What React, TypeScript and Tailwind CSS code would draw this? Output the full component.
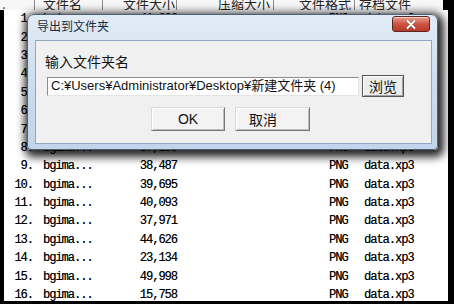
import React from 'react';

const rows: [string, string][] = [
  ['1.', '41,206'],
  ['2.', '36,512'],
  ['3.', '42,870'],
  ['4.', '39,104'],
  ['5.', '45,331'],
  ['6.', '28,764'],
  ['7.', '40,518'],
  ['8.', '37,295'],
  ['9.', '38,487'],
  ['10.', '39,695'],
  ['11.', '40,093'],
  ['12.', '37,971'],
  ['13.', '44,626'],
  ['14.', '23,134'],
  ['15.', '49,998'],
  ['16.', '15,758'],
];

const cjk = "font-['Noto_Sans_CJK_SC',sans-serif]";

const App: React.FC = () => {
  return (
    <div className="relative w-[454px] h-[304px] bg-black overflow-hidden font-['Liberation_Mono','Noto_Sans_CJK_SC',monospace]">
      {/* column header, top cut off */}
      <div className={`flex h-[10px] w-[443px] bg-[#f7f7f7] overflow-hidden text-[13px] leading-[13px] text-[#222] ${cjk}`}>
        <div className="w-[35px] flex items-end border-r border-[#8a8a8a] pl-[2px]">.</div>
        <div className="w-[68px] flex items-end border-r border-[#8a8a8a] pl-[8px]">文件名</div>
        <div className="w-[74px] flex items-end justify-end border-r border-[#8a8a8a] pr-[1px]">文件大小</div>
        <div className="w-[97px] flex items-end justify-end border-r border-[#8a8a8a] pr-[3px]">压缩大小</div>
        <div className="w-[81px] flex items-end justify-end border-r border-[#8a8a8a] pr-[3px]">文件格式</div>
        <div className="flex-1 flex items-end pl-[4px]">存档文件</div>
      </div>

      {/* file list */}
      <div className="ml-[4px] mr-[6px] h-[291px] bg-white overflow-hidden text-[12px] tracking-[-1px] text-black [text-shadow:0.2px_0_0_rgba(0,0,0,0.6)]">
        {rows.map(([n, size]) => (
          <div key={n} className="grid grid-cols-[30px_70px_74px_151px_35px_1fr] h-[18.4px] items-center leading-none">
            <span className="text-right pr-[1px]">{n}</span>
            <span className="pl-[9px]">bgima...</span>
            <span className="text-right pr-[1px]">{size}</span>
            <span />
            <span>PNG</span>
            <span>data.xp3</span>
          </div>
        ))}
      </div>

      {/* dialog */}
      <div className="absolute left-[27px] top-[14px] w-[411px] h-[136px] flex flex-col rounded-t-[7px] rounded-b-[4px] border border-[#4d6078] bg-gradient-to-b from-[#e2ecf7] via-[#cddcee] to-[#c2d4ea] shadow-[2px_3px_9px_4px_rgba(0,0,0,0.85)]">
        <div className="h-[25px] flex items-start">
          <span className={`mt-[3px] ml-[9px] text-[12px] leading-[16px] text-[#1c2c40] ${cjk}`}>导出到文件夹</span>
          <div className="ml-auto mr-[7px] mt-[1px] w-[38px] h-[16px] rounded-[3px] border border-[#5c2520] bg-gradient-to-b from-[#e7a08f] via-[#cd5441] to-[#b83a28] flex items-center justify-center shadow-[inset_0_1px_0_rgba(255,255,255,0.5)]">
            <svg width="10" height="9" viewBox="0 0 10 9">
              <path d="M1.5 1 L8.5 8 M8.5 1 L1.5 8" stroke="#4a1a14" strokeWidth="3" strokeLinecap="round" opacity="0.5" />
              <path d="M1.5 1 L8.5 8 M8.5 1 L1.5 8" stroke="#ffffff" strokeWidth="2" strokeLinecap="round" />
            </svg>
          </div>
        </div>

        <div className="flex-1 ml-[7px] mr-[5px] mb-[5px] bg-[#f0f0f0] border border-[#93a7c0] flex flex-col">
          <div className={`pt-[12px] pl-[9px] text-[14px] leading-[16px] text-[#111] ${cjk}`}>输入文件夹名</div>
          <div className="mt-[6px] flex items-center h-[22px] pl-[11px]">
            <div className="w-[312px] h-[19px] bg-white border border-[#8c8c8c] border-r-[#e4e4e4] border-b-[#e4e4e4] flex items-center pl-[3px] overflow-hidden whitespace-nowrap text-[13px] text-[#111] font-['Liberation_Sans','Noto_Sans_CJK_JP',sans-serif]">
              C:¥Users¥Administrator¥Desktop¥新建文件夹 (4)
            </div>
            <div className={`ml-[3px] w-[42px] h-[22px] flex items-center justify-center bg-[#ececec] border border-[#555] shadow-[inset_1px_1px_0_#fff,inset_-1px_-1px_0_#a0a0a0] text-[14px] text-[#111] ${cjk}`}>
              浏览
            </div>
          </div>
          <div className="mt-[10px] flex pl-[115px] gap-[10px]">
            <div className="w-[74px] h-[24px] flex items-center justify-center bg-[#f3f3f3] border border-[#d8d8d8] border-r-[#777] border-b-[#777] shadow-[inset_1px_1px_0_#fff,inset_-1px_-1px_0_#bdbdbd] text-[14px] text-[#111] font-['Liberation_Sans',sans-serif]">
              OK
            </div>
            <div className={`w-[75px] h-[24px] flex items-center pl-[13px] bg-[#f3f3f3] border border-[#d8d8d8] border-r-[#777] border-b-[#777] shadow-[inset_1px_1px_0_#fff,inset_-1px_-1px_0_#bdbdbd] text-[14px] text-[#111] ${cjk}`}>
              取消
            </div>
          </div>
        </div>
      </div>
    </div>
  );
};

export default App;
